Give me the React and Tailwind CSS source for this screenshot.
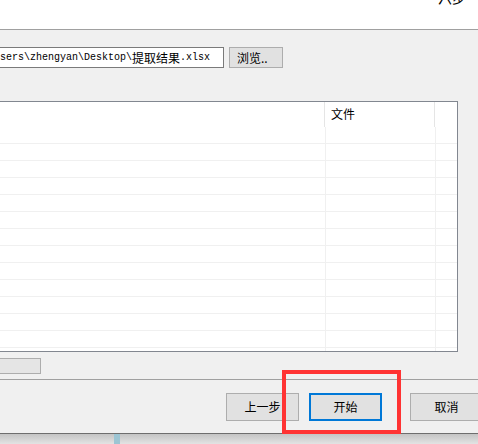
import React from "react";

const cjk = { fontFamily: '"Noto Sans CJK SC", sans-serif' };

const Btn = ({ children, active }) => (
  <div
    className={`w-[73px] h-[28px] flex items-center justify-center bg-[#e1e1e1] text-[12px] text-black shrink-0 ${
      active ? "border-2 border-[#0078d7]" : "border border-[#adadad]"
    }`}
  >
    {children}
  </div>
);

export default function App() {
  const rows = Array.from({ length: 14 });

  return (
    <div
      className="relative w-[478px] h-[444px] overflow-hidden bg-[#d9d9d9] font-['Noto_Sans_CJK_SC',sans-serif]"
    >
      {/* title strip */}
      <div className="h-[30px] bg-white border-b border-[#a0a0a0] flex justify-end pr-[12px]">
        <div className="text-[14px] leading-[14px] -mt-[10px] text-black">六步</div>
      </div>

      {/* body */}
      <div className="bg-[#f0f0f0] h-[349px] flex flex-col">
        <div className="flex items-start pt-[17px]">
          <div className="ml-[-28px] w-[252px] h-[21px] bg-white border border-[#7a7a7a] flex items-center pl-[3px] whitespace-nowrap text-black">
            <span className="font-['Liberation_Mono',monospace] text-[10px]">
              C:\Users\zhengyan\Desktop\
            </span>
            <span className="text-[12px] leading-[12px]" style={cjk}>
              提取结果
            </span>
            <span className="font-['Liberation_Mono',monospace] text-[10px]">.xlsx</span>
          </div>
          <div className="ml-[5px] w-[54px] h-[21px] bg-[#e1e1e1] border border-[#adadad] text-[12px] flex items-center pl-[7px] text-black">
            浏览..
          </div>
        </div>

        {/* list */}
        <div className="ml-[-10px] mt-[33px] w-[468px] h-[251px] border border-[#828790] bg-white overflow-hidden flex flex-col">
          <div className="flex h-[25px] shrink-0">
            <div className="flex-1 border-r border-[#e5e5e5]" />
            <div className="w-[110px] border-r border-[#e5e5e5] text-[12px] pl-[6px] pt-[5px] leading-[14px] text-black">
              文件
            </div>
            <div className="w-[22px]" />
          </div>
          {rows.map((_, i) => (
            <div key={i} className="flex h-[17px] shrink-0 border-b border-[#f0f0f0]">
              <div className="flex-1 border-r border-[#f0f0f0]" />
              <div className="w-[110px] border-r border-[#f0f0f0]" />
              <div className="w-[21px]" />
            </div>
          ))}
        </div>

        <div className="mt-[6px] w-[42px] h-[16px] bg-[#e5e5e5] border border-[#adadad] ml-[-1px]" />
      </div>

      {/* footer */}
      <div className="bg-[#f0f0f0] h-[55px] border-t border-[#a0a0a0] border-b border-b-[#6e6e6e] flex items-start pt-[13px] pl-[226px] gap-[10px]">
        <Btn>上一步</Btn>
        <Btn active>开始</Btn>
        <div className="ml-[18px]">
          <Btn>取消</Btn>
        </div>
      </div>

      {/* window shadow below */}
      <div className="h-[11px] bg-gradient-to-b from-[#c4c4c4] to-[#e6e6e6] pl-[114px]">
        <div className="w-[6px] h-full bg-[#9cc5d3]" />
      </div>

      {/* red highlight */}
      <div className="absolute left-[282px] top-[370px] w-[119px] h-[64px] border-[4px] border-[#ff3333]" />
    </div>
  );
}
